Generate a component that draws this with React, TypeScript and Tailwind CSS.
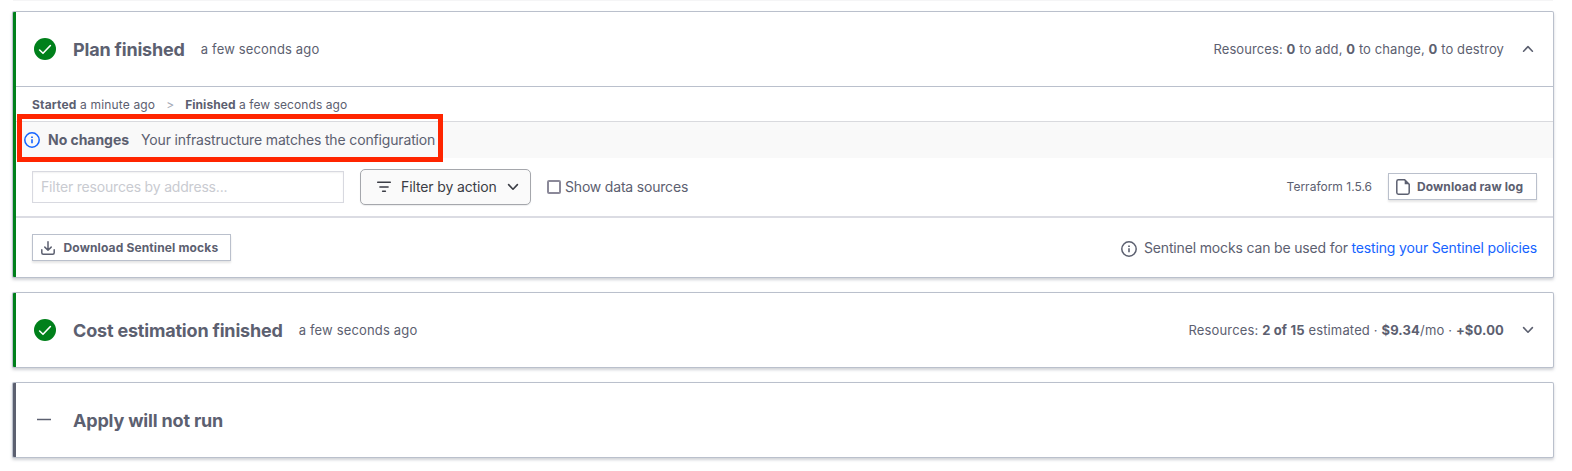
import type { ReactNode } from "react";

function CheckCircle() {
  return (
    <svg className="block size-[22px] shrink-0" viewBox="0 0 22 22" fill="none">
      <circle cx="11" cy="11" r="11" fill="#00801b" />
      <path d="M5.6 12l3.4 3.3 7.4-7.8" stroke="#fff" strokeWidth="1.6" strokeLinecap="round" strokeLinejoin="round" />
    </svg>
  );
}

function InfoIcon({ className }: { className: string }) {
  return (
    <svg className={className} viewBox="0 0 16 16" fill="none">
      <circle cx="8" cy="8" r="7.2" stroke="currentColor" strokeWidth="1.5" />
      <path d="M8 7.3v3.9" stroke="currentColor" strokeWidth="1.6" />
      <path d="M8 4.4v1.5" stroke="currentColor" strokeWidth="1.7" />
    </svg>
  );
}

function Chevron({ up = false }: { up?: boolean }) {
  return (
    <svg className="block h-[16px] w-[16px] shrink-0" viewBox="0 0 16 16" fill="none">
      <path
        d={up ? "M3.6 10.2L8 5.6l4.4 4.6" : "M3.6 5.6L8 10.2l4.4-4.6"}
        stroke="currentColor"
        strokeWidth="1.6"
        strokeLinecap="round"
        strokeLinejoin="round"
      />
    </svg>
  );
}

function Card({ bar, children }: { bar: string; children: ReactNode }) {
  return (
    <section
      className={`relative rounded-[1px] border-l-3 bg-white shadow-[0_0_0_1px_#bac0cc,0_2px_3px_1px_rgba(90,96,112,0.28)] ${bar}`}
    >
      {children}
    </section>
  );
}

function Header({
  icon,
  title,
  time,
  children,
}: {
  icon: ReactNode;
  title: string;
  time?: string;
  children?: ReactNode;
}) {
  return (
    <header className="flex h-[74px] items-center pr-[17px] pl-[18px]">
      {icon}
      <h2 className="ml-[17px] text-[18px] font-bold tracking-[-0.18px]">{title}</h2>
      {time && <span className="mt-[2px] ml-4 text-[13px] tracking-[0.16px]">{time}</span>}
      <div className="ml-auto flex items-center gap-4">{children}</div>
    </header>
  );
}

export default function App() {
  return (
    <main className="h-[471px] overflow-hidden bg-white font-['Inter','Liberation_Sans',sans-serif] text-[#5c6070]">
      <div className="mr-[19px] ml-[13px] h-px bg-[#f5f5f6]" />
      <div className="mr-[19px] ml-[13px] flex flex-col gap-4 pt-[11px]">
        <Card bar="border-[#00801b]">
          <Header icon={<CheckCircle />} title="Plan finished" time="a few seconds ago">
            <span className="mt-[2px] text-[13px] tracking-[0.1px]">
              Resources: <b>0</b> to add, <b>0</b> to change, <b>0</b> to destroy
            </span>
            <Chevron up />
          </Header>
          <div className="flex h-[35px] items-center border-t border-[#bac0cc] pt-[2px] pl-4 text-[12px]">
            <span className="tracking-[0.16px]">
              <b>Started</b> a minute ago
            </span>
            <span className="mx-[11px] text-[#a5aab6]">&gt;</span>
            <span className="tracking-[0.07px]">
              <b>Finished</b> a few seconds ago
            </span>
          </div>
          <div className="flex h-[37px] items-center border-t border-[#d9dade] bg-[#f9f9f9] pl-2 text-[14px]">
            <InfoIcon className="block size-4 shrink-0 text-[#1563ff]" />
            <b className="mb-[2px] ml-2 tracking-[-0.04px]">No changes</b>
            <span className="mb-[2px] ml-3 tracking-[-0.15px]">Your infrastructure matches the configuration</span>
          </div>
          <div className="absolute top-[102px] left-[1px] h-[48px] w-[426px] border-5 border-[#ff2500]" />
          <div className="flex h-[58px] items-center pr-4 pl-4">
            <input
              className="h-8 w-[312px] border border-[#d8d9e0] bg-white px-2 pb-[2px] text-[14px] tracking-[-0.19px] shadow-[inset_0_1px_2px_rgba(0,0,0,0.06)] placeholder:text-[#c9cbd1]"
              placeholder="Filter resources by address..."
            />
            <button className="ml-4 flex h-9 w-[171px] items-center rounded-[5px] border border-[#a5a7ac] bg-[#fafafa] pl-[15px] text-[14px] text-[#3b3d45] shadow-[0_1px_1px_rgba(101,106,118,0.12)]">
              <svg className="block size-4 shrink-0" viewBox="0 0 16 16" fill="none">
                <path d="M1.7 3.3h12.6M3.9 7.9h8.2M6.6 12.2h2.8" stroke="currentColor" strokeWidth="1.5" strokeLinecap="round" />
              </svg>
              <span className="mb-[2px] ml-[9px] tracking-[-0.12px]">Filter by action</span>
              <span className="ml-2">
                <Chevron />
              </span>
            </button>
            <span className="ml-4 size-[14px] rounded-[2px] border-2 border-[#8b8999]" />
            <span className="mb-[2px] ml-[4px] text-[14px] tracking-[-0.19px]">Show data sources</span>
            <span className="ml-auto text-[12px]">Terraform 1.5.6</span>
            <button className="mb-px ml-4 flex h-[27px] w-[149px] items-center border border-[#bac0cc] bg-white pl-[7px] text-[12px] font-bold shadow-[0_2px_2px_rgba(0,0,0,0.1)]">
              <svg className="block h-4 w-[14px] shrink-0" viewBox="0 0 14 16" fill="none">
                <path d="M8.7.8H2.4C1.5.8.8 1.5.8 2.4v11.2c0 .9.7 1.6 1.6 1.6h9.2c.9 0 1.6-.7 1.6-1.6V5.3z" stroke="currentColor" strokeWidth="1.5" strokeLinejoin="round" />
                <path d="M8.7.8v4.5h4.5z" fill="currentColor" />
              </svg>
              <span className="ml-[7px] tracking-[0.1px]">Download raw log</span>
            </button>
          </div>
          <div className="flex h-[61px] items-center border-t-2 border-[#dbdce3] pr-4 pl-4">
            <button className="flex h-[27px] w-[199px] items-center border border-[#bac0cc] bg-white pl-2 text-[12px] font-bold shadow-[0_2px_2px_rgba(0,0,0,0.1)]">
              <svg className="block size-[14px] shrink-0" viewBox="0 0 14 14" fill="none">
                <path d="M.8 8.8v2.9c0 .9.6 1.5 1.5 1.5h9.4c.9 0 1.5-.6 1.5-1.5V8.8M7 .8v8.4M3.8 6.1L7 9.3l3.2-3.2" stroke="currentColor" strokeWidth="1.5" strokeLinecap="round" strokeLinejoin="round" />
              </svg>
              <span className="ml-[8.5px] tracking-[0.14px]">Download Sentinel mocks</span>
            </button>
            <InfoIcon className="mt-[2px] mr-[7px] ml-auto block size-4 shrink-0" />
            <span className="text-[14px] tracking-[-0.155px]">
              Sentinel mocks can be used for <a className="text-[#1563ff]">testing your Sentinel policies</a>
            </span>
          </div>
        </Card>
        <Card bar="border-[#00801b]">
          <Header icon={<CheckCircle />} title="Cost estimation finished" time="a few seconds ago">
            <span className="mt-[2px] text-[13px] tracking-[0.15px]">
              Resources: <b>2 of 15</b> estimated · <b>$9.34</b>/mo · <b>+$0.00</b>
            </span>
            <Chevron />
          </Header>
        </Card>
        <Card bar="border-[#5c6070]">
          <Header
            icon={
              <svg className="block size-[22px] shrink-0" viewBox="0 0 22 22" fill="none">
                <path d="M3 10.5h14" stroke="currentColor" strokeWidth="1.5" />
              </svg>
            }
            title="Apply will not run"
          />
        </Card>
      </div>
    </main>
  );
}
